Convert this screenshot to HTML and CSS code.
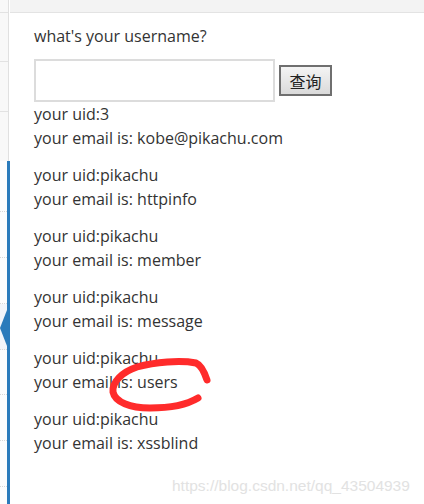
FILE: index.html
```html
<!DOCTYPE html>
<html>
<head>
<meta charset="utf-8">
<link rel="stylesheet" href="styles.css">
</head>
<body>
<div class="page">
  <aside class="side">
    <div class="side-top">
      <div class="nav-item h12"></div>
      <div class="nav-item h49"></div>
      <div class="nav-item h50"></div>
      <div class="nav-item h49 last"></div>
    </div>
    <div class="side-sub">
      <div class="sub-item h51"></div>
      <div class="sub-item h46"></div>
      <div class="sub-item h46"></div>
      <div class="sub-item h46 active"><span class="arrow"></span></div>
      <div class="sub-item h45"></div>
      <div class="sub-item h46"></div>
      <div class="sub-item h46"></div>
    </div>
  </aside>
  <main class="main">
    <div class="topbar"></div>
    <div class="content">
      <form class="ask">
        <p class="question">what's your username?</p>
        <div class="row">
          <input class="field" type="text">
          <button class="btn" type="button">查询</button>
        </div>
      </form>
      <p class="notice first">your uid:3<br>your email is: kobe@pikachu.com</p>
      <p class="notice">your uid:pikachu<br>your email is: httpinfo</p>
      <p class="notice">your uid:pikachu<br>your email is: member</p>
      <p class="notice">your uid:pikachu<br>your email is: message</p>
      <p class="notice">your uid:pikachu<br>your email is: users</p>
      <p class="notice">your uid:pikachu<br>your email is: xssblind</p>
    </div>
  </main>
  <svg class="scribble" width="424" height="504" viewBox="0 0 424 504">
    <path d="M207,380 C204,371 201,365 196,363 C180,360 155,362 137,367 C122,372 112,382 113,392 C115,402 130,408 150,408 C170,408 188,404 198,398" fill="none" stroke="#ff2b2b" stroke-width="7" stroke-linecap="round" stroke-linejoin="round"/>
  </svg>
  <div class="watermark">https://blog.csdn.net/qq_43504939</div>
</div>
</body>
</html>
```
FILE: styles.css
```css
* { box-sizing: border-box; }
html, body { margin: 0; padding: 0; }
body {
  width: 424px;
  height: 504px;
  overflow: hidden;
  background: #fff;
  font-family: "Open Sans", "Noto Sans", sans-serif;
  color: #333;
}
.page {
  position: relative;
  display: flex;
  width: 424px;
  height: 504px;
}
.side {
  width: 10px;
  display: flex;
  flex-direction: column;
  flex: none;
}
.side-top {
  height: 161px;
  width: 9px;
  border-right: 1px solid #e0e0e0;
  background: #f8f8f8;
  display: flex;
  flex-direction: column;
}
.nav-item { border-bottom: 1px solid #e2e2e2; flex: none; }
.nav-item.last { border-bottom: none; }
.h12 { height: 13px; }
.h49 { height: 49px; }
.h50 { height: 50px; }
.h51 { height: 51px; }
.h46 { height: 46px; }
.h45 { height: 45px; }
.side-sub {
  flex: 1;
  width: 10px;
  border-right: 3px solid #2b7bbb;
  background: #fdfdfd;
  display: flex;
  flex-direction: column;
}
.sub-item {
  flex: none;
  border-bottom: 1px dotted #d8d8d8;
}
.sub-item.active {
  position: relative;
  background: #f2f5fa;
}
.arrow {
  position: absolute;
  right: 0;
  top: 6px;
  width: 0;
  height: 0;
  border-top: 18px solid transparent;
  border-bottom: 18px solid transparent;
  border-right: 7px solid #2b7bbb;
}
.main {
  flex: 1;
  display: flex;
  flex-direction: column;
}
.topbar {
  height: 13px;
  background: #f3f3f3;
  border-bottom: 1px solid #e3e3e3;
  flex: none;
}
.content {
  padding: 11px 0 0 24px;
  font-size: 16px;
  line-height: 24px;
}
.ask { margin: 0; }
.question { margin: 0 0 11px; }
.row {
  display: flex;
  align-items: center;
  gap: 4px;
  height: 43px;
}
.field {
  width: 241px;
  height: 43px;
  border: 2px solid #dcdcdc;
  margin: 0;
  padding: 0;
  background: #fff;
}
.btn {
  width: 53px;
  height: 31px;
  border: 2px solid #6f6f6f;
  background: linear-gradient(#f4f4f4, #dadada);
  font-family: "Noto Sans CJK SC", sans-serif;
  font-size: 16px;
  color: #222;
  padding: 0;
  margin: 0;
  line-height: 26px;
}
.notice { margin: 13px 0 0; }
.notice.first { margin: 0 0 2px; }
.scribble {
  position: absolute;
  left: 0;
  top: 0;
  pointer-events: none;
}
.watermark {
  position: absolute;
  left: 172px;
  top: 477px;
  font-family: "Liberation Sans", Arial, sans-serif;
  font-size: 15.5px;
  color: #e2e2e2;
  white-space: nowrap;
}
```
